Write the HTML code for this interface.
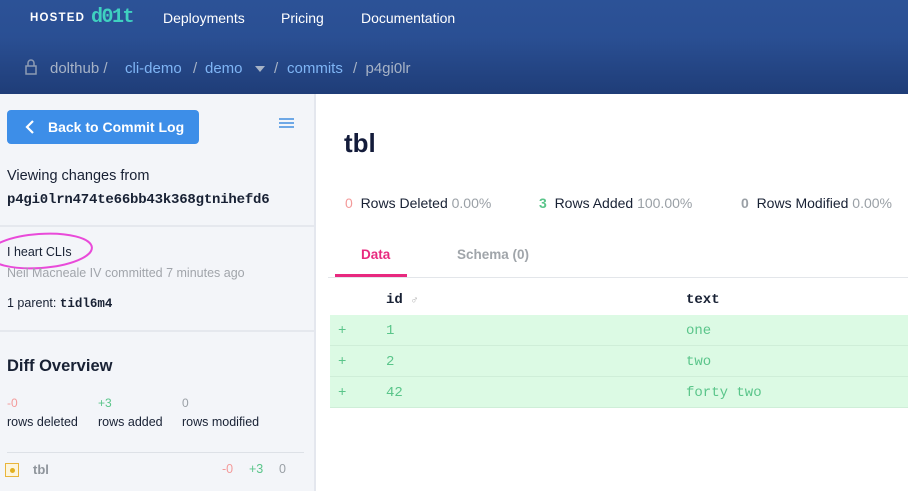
<!DOCTYPE html>
<html><head><style>
*{margin:0;padding:0;box-sizing:border-box}
body{width:908px;height:491px;overflow:hidden;font-family:"Liberation Sans",sans-serif;background:#fff;position:relative;color:#182134}
.a{position:absolute;white-space:nowrap}
.mono{font-family:"Liberation Mono",monospace}
#hdr{position:absolute;left:0;top:0;width:908px;height:94px;background:linear-gradient(#2c5297 0%,#2a4f93 40%,#1f3d78 100%)}
#side{position:absolute;left:0;top:94px;width:316px;height:397px;background:#f3f5f9;border-right:2px solid #e4e7ee}
.sep{position:absolute;left:0;width:314px;height:2px;background:#e5e8ee}
.grn{color:#5ac58a}.red{color:#f39a9a}.gry{color:#9aa0a6}
.row{position:absolute;left:330px;width:578px;height:31px;background:#dcfae4;border-bottom:1px solid #cfeed8}
.row span{position:absolute;top:8px;font-family:"Liberation Mono",monospace;font-size:14px;color:#5ac58a}
</style></head><body>
<div id="hdr">
  <div class="a" style="left:30px;top:13px;color:#fff;font-weight:bold;font-size:11.5px;letter-spacing:1.2px;line-height:1">HOSTED</div>
  <div class="a mono" style="left:91px;top:8px;color:#3fd1c0;font-weight:bold;font-size:20px;letter-spacing:-1.5px;line-height:1">d01t</div>
  <div class="a" style="left:163px;top:10px;color:#fff;font-size:14px">Deployments</div>
  <div class="a" style="left:281px;top:10px;color:#fff;font-size:14px">Pricing</div>
  <div class="a" style="left:361px;top:10px;color:#fff;font-size:14px">Documentation</div>
  <svg class="a" style="left:25px;top:59px" width="12" height="16" viewBox="0 0 12 16"><rect x="1" y="7" width="10" height="8" fill="none" stroke="#8d9bb3" stroke-width="1.5"/><path d="M3 7V4a3 3 0 0 1 6 0v3" fill="none" stroke="#8d9bb3" stroke-width="1.5"/></svg>
  <div class="a" style="left:50px;top:60px;font-size:15px;color:#a7b3c6">dolthub /</div>
  <div class="a" style="left:125px;top:60px;font-size:15px;color:#7fb5f5">cli-demo</div>
  <div class="a" style="left:193px;top:60px;font-size:15px;color:#a7b3c6">/</div>
  <div class="a" style="left:205px;top:60px;font-size:15px;color:#7fb5f5">demo</div>
  <div class="a" style="left:255px;top:66px;width:0;height:0;border-left:5px solid transparent;border-right:5px solid transparent;border-top:6px solid #a7b3c6"></div>
  <div class="a" style="left:274px;top:60px;font-size:15px;color:#a7b3c6">/</div>
  <div class="a" style="left:287px;top:60px;font-size:15px;color:#7fb5f5">commits</div>
  <div class="a" style="left:353px;top:60px;font-size:15px;color:#a7b3c6">/ &nbsp;p4gi0lr</div>
</div>
<div id="side">
  <div class="a" style="left:7px;top:16px;width:192px;height:34px;background:#3d8ee8;border-radius:4px"></div>
  <svg class="a" style="left:25px;top:26px" width="10" height="14" viewBox="0 0 10 14"><path d="M8 1L2 7l6 6" fill="none" stroke="#fff" stroke-width="2.2"/></svg>
  <div class="a" style="left:48px;top:25px;color:#fff;font-weight:bold;font-size:14px">Back to Commit Log</div>
  <div class="a" style="left:279px;top:24px;width:15px;height:2px;background:#6ea8e6;box-shadow:0 4px 0 #6ea8e6,0 8px 0 #6ea8e6"></div>
  <div class="a" style="left:7px;top:74px;font-size:14.5px">Viewing changes from</div>
  <div class="a mono" style="left:7px;top:98px;font-size:14px;font-weight:bold;letter-spacing:-0.2px">p4gi0lrn474te66bb43k368gtnihefd6</div>
  <div class="sep" style="top:131px"></div>
  <div class="a" style="left:7px;top:151px;font-size:12.5px">I heart CLIs</div>
  <svg class="a" style="left:-5px;top:134px" width="110" height="50"><ellipse cx="45" cy="23" rx="52" ry="17" fill="none" stroke="#e94ad9" stroke-width="2" transform="rotate(-4 45 23)"/></svg>
  <div class="a" style="left:7px;top:172px;font-size:12.5px;color:#a1a5ab">Neil Macneale IV committed 7 minutes ago</div>
  <div class="a" style="left:7px;top:202px;font-size:12.5px">1 parent: <b class="mono">tidl6m4</b></div>
  <div class="sep" style="top:236px"></div>
  <div class="a" style="left:7px;top:263px;font-size:16.5px;font-weight:bold">Diff Overview</div>
  <div class="a red" style="left:7px;top:302px;font-size:12px">-0</div>
  <div class="a grn" style="left:98px;top:302px;font-size:12px">+3</div>
  <div class="a gry" style="left:182px;top:302px;font-size:12px">0</div>
  <div class="a" style="left:7px;top:321px;font-size:12.5px">rows deleted</div>
  <div class="a" style="left:98px;top:321px;font-size:12.5px">rows added</div>
  <div class="a" style="left:182px;top:321px;font-size:12.5px">rows modified</div>
  <div class="a" style="left:7px;top:358px;width:297px;height:1px;background:#dde1e7"></div>
  <div class="a" style="left:5px;top:369px;width:14px;height:14px;border:1.5px solid #e9b53b;background:#fdf5dc"></div>
  <div class="a" style="left:10px;top:374px;width:5px;height:5px;border-radius:50%;background:#e2b021"></div>
  <div class="a" style="left:33px;top:368px;font-size:13px;color:#8f959c;font-weight:bold">tbl</div>
  <div class="a red" style="left:222px;top:368px;font-size:12.5px">-0</div>
  <div class="a grn" style="left:249px;top:368px;font-size:12.5px">+3</div>
  <div class="a gry" style="left:279px;top:368px;font-size:12.5px">0</div>
</div>
<div class="a" style="left:344px;top:128px;font-size:26px;font-weight:bold;color:#131b3a">tbl</div>
<div class="a" style="left:345px;top:195px;font-size:14px"><span class="red">0</span>&nbsp; Rows Deleted <span class="gry">0.00%</span></div>
<div class="a" style="left:539px;top:195px;font-size:14px"><span class="grn" style="font-weight:bold">3</span>&nbsp; Rows Added <span class="gry">100.00%</span></div>
<div class="a" style="left:741px;top:195px;font-size:14px"><span class="gry" style="font-weight:bold">0</span>&nbsp; Rows Modified <span class="gry">0.00%</span></div>
<div class="a" style="left:361px;top:247px;font-size:13.5px;font-weight:bold;color:#e8297f">Data</div>
<div class="a" style="left:457px;top:247px;font-size:13.5px;font-weight:bold;color:#a0a5aa">Schema (0)</div>
<div class="a" style="left:328px;top:277px;width:580px;height:1px;background:#e3e6ea"></div>
<div class="a" style="left:335px;top:274px;width:72px;height:3px;background:#e8297f"></div>
<div class="a mono" style="left:386px;top:292px;font-size:14px;font-weight:bold">id <span style="color:#aaa;font-weight:normal;font-size:11px">♂</span></div>
<div class="a mono" style="left:686px;top:292px;font-size:14px;font-weight:bold">text</div>
<div class="row" style="top:315px"><span style="left:8px">+</span><span style="left:56px">1</span><span style="left:356px">one</span></div>
<div class="row" style="top:346px"><span style="left:8px">+</span><span style="left:56px">2</span><span style="left:356px">two</span></div>
<div class="row" style="top:377px"><span style="left:8px">+</span><span style="left:56px">42</span><span style="left:356px">forty two</span></div>
</body></html>
